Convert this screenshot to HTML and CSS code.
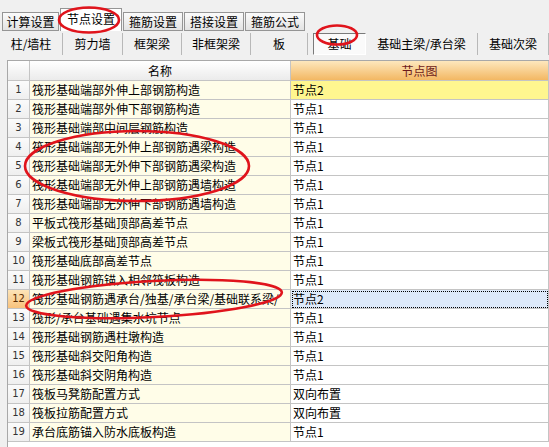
FILE: index.html
```html
<!DOCTYPE html>
<html lang="zh-CN">
<head>
<meta charset="utf-8">
<title>节点设置</title>
<link rel="stylesheet" href="styles.css">
</head>
<body>
<div class="page">
  <div class="tabs">
    <div class="tab t1">计算设置</div>
    <div class="tab active">节点设置</div>
    <div class="tab">箍筋设置</div>
    <div class="tab">搭接设置</div>
    <div class="tab">箍筋公式</div>
  </div>
  <div class="toolbar">
    <div class="btn b1">柱/墙柱</div>
    <div class="btn b2">剪力墙</div>
    <div class="btn b3">框架梁</div>
    <div class="btn b4">非框架梁</div>
    <div class="btn b5">板</div>
    <div class="btn pressed">基础</div>
    <div class="btn b7">基础主梁/承台梁</div>
    <div class="btn b8">基础次梁</div>
  </div>
  <div class="grid">
    <div class="row head">
      <div class="cell num"></div>
      <div class="cell name">名称</div>
      <div class="cell node">节点图</div>
    </div>
    <div class="row"><div class="cell num">1</div><div class="cell name">筏形基础端部外伸上部钢筋构造</div><div class="cell node hl">节点2</div></div>
    <div class="row"><div class="cell num">2</div><div class="cell name">筏形基础端部外伸下部钢筋构造</div><div class="cell node">节点1</div></div>
    <div class="row"><div class="cell num">3</div><div class="cell name">筏形基础端部中间层钢筋构造</div><div class="cell node">节点1</div></div>
    <div class="row"><div class="cell num">4</div><div class="cell name">筏形基础端部无外伸上部钢筋遇梁构造</div><div class="cell node">节点1</div></div>
    <div class="row"><div class="cell num">5</div><div class="cell name">筏形基础端部无外伸下部钢筋遇梁构造</div><div class="cell node">节点1</div></div>
    <div class="row"><div class="cell num">6</div><div class="cell name">筏形基础端部无外伸上部钢筋遇墙构造</div><div class="cell node">节点1</div></div>
    <div class="row"><div class="cell num">7</div><div class="cell name">筏形基础端部无外伸下部钢筋遇墙构造</div><div class="cell node">节点1</div></div>
    <div class="row"><div class="cell num">8</div><div class="cell name">平板式筏形基础顶部高差节点</div><div class="cell node">节点1</div></div>
    <div class="row"><div class="cell num">9</div><div class="cell name">梁板式筏形基础顶部高差节点</div><div class="cell node">节点1</div></div>
    <div class="row"><div class="cell num">10</div><div class="cell name">筏形基础底部高差节点</div><div class="cell node">节点1</div></div>
    <div class="row"><div class="cell num">11</div><div class="cell name">筏形基础钢筋锚入相邻筏板构造</div><div class="cell node">节点1</div></div>
    <div class="row current"><div class="cell num">12</div><div class="cell name">筏形基础钢筋遇承台/独基/承台梁/基础联系梁/</div><div class="cell node focus">节点2</div></div>
    <div class="row"><div class="cell num">13</div><div class="cell name">筏形/承台基础遇集水坑节点</div><div class="cell node">节点1</div></div>
    <div class="row"><div class="cell num">14</div><div class="cell name">筏形基础钢筋遇柱墩构造</div><div class="cell node">节点1</div></div>
    <div class="row"><div class="cell num">15</div><div class="cell name">筏形基础斜交阳角构造</div><div class="cell node">节点1</div></div>
    <div class="row"><div class="cell num">16</div><div class="cell name">筏形基础斜交阴角构造</div><div class="cell node">节点1</div></div>
    <div class="row"><div class="cell num">17</div><div class="cell name">筏板马凳筋配置方式</div><div class="cell node">双向布置</div></div>
    <div class="row"><div class="cell num">18</div><div class="cell name">筏板拉筋配置方式</div><div class="cell node">双向布置</div></div>
    <div class="row"><div class="cell num">19</div><div class="cell name">承台底筋锚入防水底板构造</div><div class="cell node">节点1</div></div>
  </div>
  <svg class="marks" width="549" height="447" viewBox="0 0 549 447">
    <ellipse cx="89" cy="20" rx="30" ry="12.5"/>
    <ellipse cx="337" cy="35" rx="20" ry="9.5"/>
    <ellipse cx="137" cy="166" rx="112" ry="35"/>
    <ellipse cx="154" cy="299" rx="128" ry="18" transform="rotate(-3 154 299)"/>
  </svg>
</div>
</body>
</html>
```
FILE: styles.css
```css
html, body {
  margin: 0;
  padding: 0;
}
body {
  background: #f0f0f0;
  font-family: "Noto Sans CJK SC", "Liberation Sans", sans-serif;
  font-size: 12px;
  color: #000;
}
.page {
  position: relative;
  width: 549px;
  height: 447px;
  overflow: hidden;
}
.tabs {
  display: flex;
  align-items: flex-end;
  height: 31px;
  padding-left: 2px;
  box-sizing: border-box;
}
.tab {
  box-sizing: border-box;
  width: 60px;
  height: 19px;
  margin-right: 1px;
  border: 1px solid #959595;
  background: linear-gradient(#fbfbfb, #e3e3e3);
  display: flex;
  align-items: center;
  justify-content: center;
  line-height: 14px;
}
.tab.t1 { width: 57px; }
.tab.active {
  width: 62px;
  height: 23px;
  border-bottom: none;
  background: #ffffff;
  padding-bottom: 2px;
}
.toolbar {
  display: flex;
  align-items: center;
  height: 26px;
}
.btn {
  box-sizing: border-box;
  height: 22px;
  display: flex;
  align-items: center;
  justify-content: center;
  border-right: 1px solid #b8b8b8;
  line-height: 14px;
}
.b1 { width: 63px; }
.b2 { width: 60px; }
.b3 { width: 59px; }
.b4 { width: 69px; }
.b5 { width: 57px; }
.btn.pressed {
  width: 53px;
  margin-left: 5px;
  border: 1px solid;
  border-color: #7a7a7a #ffffff #ffffff #7a7a7a;
  background: #fafafa;
}
.b7 { width: 112px; margin-left: 0; }
.b8 { width: 71px; }
.grid {
  margin: 3px 0 0 7px;
  border-left: 1px solid #a8a8a8;
  border-top: 1px solid #a8a8a8;
  background: #ffffff;
  height: 400px;
}
.row {
  display: grid;
  grid-template-columns: 22px 261px 1fr;
  height: 19px;
}
.row.head { height: 20px; }
.cell {
  box-sizing: border-box;
  border-right: 1px solid #c4c4c4;
  border-bottom: 1px solid #c4c4c4;
  white-space: nowrap;
  overflow: hidden;
  line-height: 18px;
}
.num {
  background: linear-gradient(#fbfbfb, #efefef);
  font-family: "DejaVu Sans", sans-serif;
  font-size: 10px;
  color: #333;
  text-align: center;
}
.name {
  background: #fffde8;
  padding-left: 2px;
}
.node {
  background: #ffffff;
  padding-left: 2px;
}
.head .cell { line-height: 19px; }
.head .num, .head .name {
  background: linear-gradient(#ffffff, #ebebeb);
}
.head .name { text-align: center; padding-left: 0; }
.head .node {
  background: linear-gradient(#fde7bd, #f3b863);
  color: #6e1a1a;
  text-align: center;
  padding-left: 0;
}
.node.hl { background: #fff68f; }
.current .num {
  background: linear-gradient(#fde4b8, #f8c27c);
  color: #5a2a00;
}
.node.focus {
  background: #dde9f9;
  outline: 1px dotted #000;
  outline-offset: -2px;
  line-height: 18px;
}
.marks {
  position: absolute;
  left: 0;
  top: 0;
  pointer-events: none;
}
.marks ellipse {
  fill: none;
  stroke: #e0141c;
  stroke-width: 2.6;
}
```
